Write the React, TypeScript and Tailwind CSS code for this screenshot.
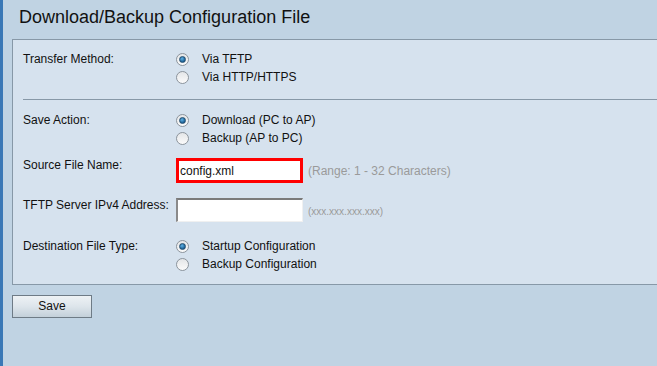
import React from "react";

function Radio({ checked }: { checked?: boolean }) {
  return (
    <div className="w-[13px] h-[13px] rounded-full border border-[#8c949c] bg-gradient-to-b from-[#e4e6e8] to-[#fbfbfb] flex items-center justify-center shrink-0">
      {checked && (
        <div className="w-[7px] h-[7px] rounded-full bg-[radial-gradient(circle_at_40%_35%,#5fb2e6,#1b5f93_70%)] border border-[#234e70]" />
      )}
    </div>
  );
}

function RadioRow({ checked, label }: { checked?: boolean; label: string }) {
  return (
    <div className="flex items-center h-[18px]">
      <Radio checked={checked} />
      <span className="ml-[13px]">{label}</span>
    </div>
  );
}

export default function App() {
  return (
    <div
      className="w-full h-[366px] bg-[#c0d3e3] flex text-[12px] text-[#111]"
      style={{ fontFamily: '"Liberation Sans", Arial, sans-serif' }}
    >
      <div className="w-[3px] h-full bg-[#3a78b6] shrink-0" />
      <div className="flex-1 pl-[9px]">
        <div className="h-[39px] pl-[7px] pt-[6px] text-[18px] leading-[22px] text-[#111]">
          Download/Backup Configuration File
        </div>
        <div className="border-l border-t border-b border-[#8798a7] bg-[#d6e2ee] pl-[10px] pt-[10px] pb-[11px]">
          <div className="flex">
            <div className="w-[153px] leading-[18px]">Transfer Method:</div>
            <div className="flex flex-col">
              <RadioRow checked label="Via TFTP" />
              <RadioRow label="Via HTTP/HTTPS" />
            </div>
          </div>
          <div className="mt-[13px] h-px bg-[#8798a7]" />
          <div className="flex mt-[11px]">
            <div className="w-[153px] leading-[18px]">Save Action:</div>
            <div className="flex flex-col">
              <RadioRow checked label="Download (PC to AP)" />
              <RadioRow label="Backup (AP to PC)" />
            </div>
          </div>
          <div className="flex mt-[11px] items-center">
            <div className="w-[153px] leading-[14px] self-start">Source File Name:</div>
            <div className="w-[127px] h-[25px] border-[3px] border-[#ff0000] bg-white flex items-center pl-[1px]">
              config.xml
            </div>
            <span className="ml-[5px] text-[#9a9a9a]">(Range: 1 - 32 Characters)</span>
          </div>
          <div className="flex mt-[15px] items-center">
            <div className="w-[153px] leading-[14px] self-start">TFTP Server IPv4 Address:</div>
            <div className="w-[127px] h-[24px] bg-white border-t-2 border-l-2 border-r border-b border-t-[#7a7a7a] border-l-[#8a8a8a] border-r-[#f0f0f0] border-b-[#f0f0f0]" />
            <span className="ml-[5px] text-[10px] text-[#9a9a9a] mt-[2px]">(xxx.xxx.xxx.xxx)</span>
          </div>
          <div className="flex mt-[15px]">
            <div className="w-[153px] leading-[18px]">Destination File Type:</div>
            <div className="flex flex-col">
              <RadioRow checked label="Startup Configuration" />
              <RadioRow label="Backup Configuration" />
            </div>
          </div>
        </div>
        <button className="mt-[10px] w-[80px] h-[23px] border border-[#6e7b86] bg-gradient-to-b from-[#eef2f5] via-[#dde5eb] to-[#c3d0da] text-[12px] text-[#111] flex items-center justify-center pb-[1px]">
          Save
        </button>
      </div>
    </div>
  );
}
